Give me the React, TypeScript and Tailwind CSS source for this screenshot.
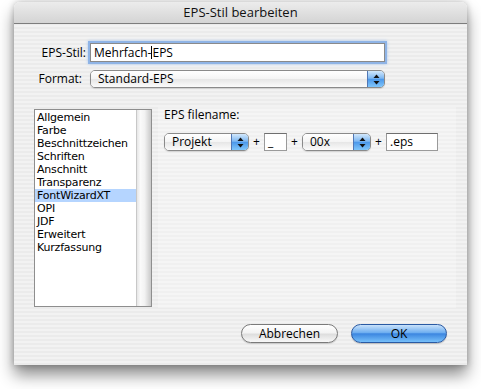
import React from "react";

const stripes =
  "bg-[repeating-linear-gradient(0deg,#ebebeb_0px,#ebebeb_2px,#f2f2f2_2px,#f2f2f2_4px)]";

function Arrows() {
  return (
    <svg width="7" height="11" viewBox="0 0 7 11">
      <path d="M3.5 0.5 L6.5 4 L0.5 4 Z" fill="#111" />
      <path d="M3.5 10.5 L6.5 7 L0.5 7 Z" fill="#111" />
    </svg>
  );
}

function Popup({ label, w, h = 18 }: { label: string; w: number; h?: number }) {
  return (
    <div
      className="flex shrink-0 rounded-[5px] border border-[#8a8a8a] overflow-hidden shadow-[0_1px_1px_rgba(0,0,0,0.12)]"
      style={{ width: w, height: h }}
    >
      <div className="flex-1 flex items-center pl-[7px] bg-[linear-gradient(#ffffff,#f4f4f4_50%,#e6e6e6_51%,#fbfbfb)] text-[12px] text-black leading-[14px]">
        {label}
      </div>
      <div className="w-[17px] flex items-center justify-center border-l border-[#5177b5] bg-[linear-gradient(#d2e8fc,#7fb8f2_45%,#4c98ea_52%,#80c6fb)]">
        <Arrows />
      </div>
    </div>
  );
}

function Field({ value, w }: { value: string; w: number }) {
  return (
    <div
      className="shrink-0 h-[18px] bg-white border border-[#9a9a9a] border-t-[#6f6f6f] flex items-center pl-[3px] text-[12px] leading-[14px] text-black"
      style={{ width: w }}
    >
      {value}
    </div>
  );
}

function Plus() {
  return <span className="w-[15px] text-center text-[12px] text-black leading-[14px]">+</span>;
}

const items = [
  "Allgemein",
  "Farbe",
  "Beschnittzeichen",
  "Schriften",
  "Anschnitt",
  "Transparenz",
  "FontWizardXT",
  "OPI",
  "JDF",
  "Erweitert",
  "Kurzfassung",
];

export default function App() {
  return (
    <div
      className="w-[481px] h-[389px] bg-white pl-[14px] pt-[2px] overflow-hidden"
      style={{ fontFamily: '"Open Sans", "DejaVu Sans", sans-serif' }}
    >
      <div
        className={`w-[453px] h-[363px] flex flex-col rounded-t-[6px] overflow-hidden shadow-[0_10px_16px_rgba(0,0,0,0.45),0_0_6px_rgba(0,0,0,0.25)] ${stripes}`}
      >
        {/* title bar */}
        <div className="h-[22px] shrink-0 flex items-center justify-center border-b border-[#7d7d7d] bg-[linear-gradient(#ececec,#d4d4d4)] text-[13px] text-[#111]">
          EPS-Stil bearbeiten
        </div>

        <div className="flex-1 flex flex-col">
          {/* rows */}
          <div className="pt-[19px] flex flex-col gap-[8px]">
            <div className="flex items-center">
              <span className="w-[76px] text-right pr-[4px] text-[12px] text-black">EPS-Stil:</span>
              <div className="w-[295px] h-[19px] bg-white border border-[#8a8a8a] shadow-[0_0_0_2px_#8fb4e6,0_0_3px_2px_#a9c8f0] flex items-center pl-[3px] text-[12px] leading-[14px] text-black">
                Mehrfach-
                <span className="inline-block w-[1px] h-[13px] bg-black" />
                EPS
              </div>
            </div>
            <div className="flex items-center">
              <span className="w-[76px] text-right pr-[8px] text-[12px] text-black">Format:</span>
              <Popup label="Standard-EPS" w={295} />
            </div>
          </div>

          {/* main */}
          <div className="flex mt-[21px] pl-[20px]">
            <div className="w-[118px] h-[198px] bg-white border border-[#8e8e8e] flex">
              <div
                className="flex-1 flex flex-col pt-[1px]"
                style={{ fontFamily: '"DejaVu Sans", sans-serif' }}
              >
                {items.map((it) => (
                  <div
                    key={it}
                    className={`h-[13px] pl-[2px] flex items-center text-[11px] tracking-[-0.2px] leading-[13px] text-black whitespace-nowrap ${
                      it === "FontWizardXT" ? "bg-[#b5d5ff]" : ""
                    }`}
                  >
                    {it}
                  </div>
                ))}
              </div>
              <div className="w-[15px] border-l border-[#c8c8c8] bg-[linear-gradient(90deg,#e6e6e6,#fafafa_25%,#f2f2f2_55%,#c9c9c9)]" />
            </div>

            <div className="ml-[6px] w-[298px] h-[201px] -mt-[2px] bg-white/25 pl-[6px] pt-[1px] flex flex-col">
              <div className="text-[12px] text-black leading-[14px]">EPS filename:</div>
              <div className="flex items-center mt-[11px]">
                <Popup label="Projekt" w={85} />
                <Plus />
                <Field value="_" w={23} />
                <Plus />
                <Popup label="00x" w={69} />
                <Plus />
                <Field value=".eps" w={52} />
              </div>
            </div>
          </div>

          {/* buttons */}
          <div className="flex justify-end gap-[13px] pr-[20px] mt-[16px]">
            <div className="w-[97px] h-[19px] rounded-full border border-[#7a7a7a] bg-[linear-gradient(#ffffff,#f3f3f3_45%,#dedede_55%,#f8f8f8)] flex items-center justify-center text-[12px] text-black shadow-[0_1px_1px_rgba(0,0,0,0.15)]">
              Abbrechen
            </div>
            <div className="w-[96px] h-[19px] rounded-full border border-[#2a5aa3] bg-[linear-gradient(#c9e2fb,#6eaef0_45%,#3c86e0_52%,#77c0fa)] flex items-center justify-center text-[12px] text-black shadow-[0_1px_1px_rgba(0,0,0,0.2)]">
              OK
            </div>
          </div>
        </div>
      </div>
    </div>
  );
}
